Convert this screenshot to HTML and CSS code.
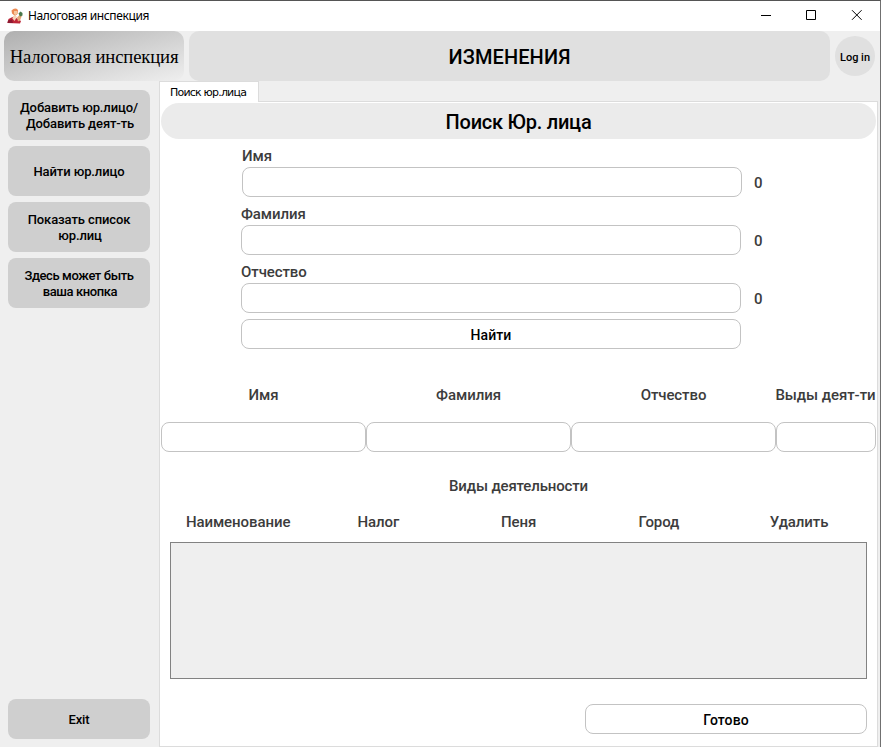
FILE: index.html
```html
<!DOCTYPE html>
<html lang="ru">
<head>
<meta charset="utf-8">
<title>Налоговая инспекция</title>
<link rel="stylesheet" href="styles.css">
</head>
<body>
<div class="window">
  <div class="titlebar">
    <svg class="app-icon" width="16" height="16" viewBox="0 0 16 16">
      <path d="M4.500 2.500Q8-1 11 2l-.5 4L8 8 5 5.500z" fill="#ec8a52"/>
      <path d="M7 3h3v3L8.500 7 7 6z" fill="#f6c79c"/>
      <path d="M.5 15l1-4 4-2 3 .5L14 13l-1 2.500z" fill="#bd2638"/>
      <path d="M6 8l2.500-.8L10 9l-2.500 4-2-2.500z" fill="#f5d4b8"/>
      <path d="M10 9.500l3-3 2 1-2 5-2 1z" fill="#e5a877"/>
      <path d="M11.500 5.500l2-2 2 1.500v2.500l-2.500 1z" fill="#48784b"/>
      <path d="M1 12.500l4-1 1 3.500H.5z" fill="#8d1830"/>
    </svg>
    <span class="app-name">Налоговая инспекция</span>
    <svg class="controls" width="110" height="20" viewBox="0 0 110 20" fill="none" stroke="#000">
      <path d="M1 9.500h10M46.500 4.500h9v9h-9z"/>
      <path d="M92 4.200l9.600 9.600M101.600 4.200L92 13.800"/>
    </svg>
  </div>
  <header class="header">
    <div class="brand">Налоговая инспекция</div>
    <div class="heading"><span>ИЗМЕНЕНИЯ</span></div>
    <button class="login">Log in</button>
  </header>
  <div class="body">
    <nav class="sidebar">
      <button class="side-btn"><span>Добавить юр.лицо/</span><span class="nudged">Добавить деят-ть</span></button>
      <button class="side-btn"><span>Найти юр.лицо</span></button>
      <button class="side-btn"><span>Показать список</span><span class="nudged">юр.лиц</span></button>
      <button class="side-btn tight"><span>Здесь может быть</span><span class="nudged">ваша кнопка</span></button>
      <button class="side-btn exit">Exit</button>
    </nav>
    <main class="main">
      <div class="tab">Поиск юр.лица</div>
      <section class="panel">
        <h1 class="title"><span>Поиск Юр. лица</span></h1>
        <form class="search">
          <label class="first">Имя</label>
          <div class="row first"><input type="text"><output>0</output></div>
          <label>Фамилия</label>
          <div class="row"><input type="text"><output>0</output></div>
          <label>Отчество</label>
          <div class="row last"><input type="text"><output>0</output></div>
          <button class="plain find" type="button">Найти</button>
        </form>
        <div class="person heads">
          <span>Имя</span><span>Фамилия</span><span>Отчество</span><span class="kinds">Выды деят-ти</span>
        </div>
        <div class="person fields"><input type="text"><input type="text"><input type="text"><input type="text"></div>
        <h2 class="subtitle">Виды деятельности</h2>
        <div class="columns"><span>Наименование</span><span>Налог</span><span>Пеня</span><span>Город</span><span>Удалить</span></div>
        <div class="list"></div>
        <button class="plain done" type="button">Готово</button>
      </section>
    </main>
  </div>
</div>
</body>
</html>
```
FILE: styles.css
```css
* { box-sizing: border-box; }
body { margin: 0; font-family: Roboto, "Liberation Sans", sans-serif; }
button, input { font: inherit; margin: 0; padding: 0; border: 0; color: #000; }
.window {
  width: 881px; height: 747px; overflow: hidden;
  display: flex; flex-direction: column;
  background: #efefef;
  border-top: 1px solid #555; border-right: 1px solid #707070;
}
.titlebar { height: 30px; flex: none; display: flex; align-items: center; background: #fff; padding: 0 10px 0 7px; }
.app-name { font: 12px/16px "Noto Sans", sans-serif; margin-left: 5px; letter-spacing: -.38px; }
.controls { margin-left: auto; }
.header { height: 50px; flex: none; display: flex; align-items: center; gap: 5px; padding: 0 5px 0 4px; }
.brand {
  width: 180px; height: 50px; border-radius: 10px;
  display: flex; align-items: center; justify-content: center;
  background: linear-gradient(165deg, #afafaf, #efefef);
  font: 18.700px/20px "Liberation Serif", serif; letter-spacing: -.15px; padding-top: 2px; white-space: nowrap;
}
.heading {
  flex: 1; height: 50px; border-radius: 10px; background: #e0e0e0;
  display: flex; align-items: center; justify-content: center;
  font-size: 20px; font-weight: 500; padding-top: 2px; letter-spacing: .1px;
}
.login { width: 40px; height: 40px; border-radius: 50%; background: #e0e0e0; font-size: 11px; font-weight: 500; padding-top: 2px; white-space: nowrap; }
.body { flex: 1; min-height: 0; display: flex; }
.sidebar { width: 159px; flex: none; padding: 9px 9px 8px 8px; display: flex; flex-direction: column; gap: 6px; }
.side-btn {
  height: 50px; border-radius: 8px; background: #cfcfcf;
  font-size: 13px; line-height: 16px; font-weight: 500; letter-spacing: -.1px;
  display: flex; flex-direction: column; align-items: center; justify-content: center;
  padding-top: 2px; white-space: nowrap;
}
.tight { letter-spacing: -.4px; }
.nudged { margin-left: 2px; }
.exit { height: 40px; margin-top: auto; }
.main { width: 719px; display: flex; flex-direction: column; }
.tab {
  width: 100px; height: 21px; margin-bottom: -1px; position: relative;
  border: 1px solid #dcdcdc; border-bottom: 0; background: #fff;
  font: 11px/21px "DejaVu Sans", sans-serif; letter-spacing: -.8px; padding-left: 10px; white-space: nowrap;
}
.panel { height: 646px; border: 1px solid #dcdcdc; background: #fff; display: flex; flex-direction: column; color: #3c3c3c; font-size: 15px; font-weight: 500; letter-spacing: -.08px; }
.title {
  margin: 1px 1px 0; height: 36px; border-radius: 18px; background: #ebebeb; color: #000;
  font-size: 20px; display: flex; align-items: center; justify-content: center; font-weight: 500; padding-top: 2px; letter-spacing: -.25px;
}
.search { margin: 8px 0 0 81px; width: 540px; display: flex; flex-direction: column; }
.search label { height: 20px; line-height: 18px; }
.row { display: flex; align-items: center; height: 30px; margin-bottom: 8px; }
.last { margin-bottom: 6px; }
.first { margin-left: 1px; }
.row output { margin-left: 13px; padding-top: 2px; }
.first output { margin-left: 12px; }
input, .plain { height: 30px; border: 1px solid #c3c3c3; border-radius: 8px; background: #fff; }
.row input { width: 500px; }
.plain { font-size: 14px; font-weight: 500; padding-top: 2px; letter-spacing: .1px; }
.find { width: 500px; }
.person { display: grid; grid-template-columns: 205px 205px 205px 100px; padding-left: 1px; }
.heads { margin-top: 36px; height: 20px; line-height: 20px; text-align: center; white-space: nowrap; }
.kinds { margin-left: -1px; letter-spacing: -.05px; }
.fields { margin-top: 17px; }
.fields input { width: 100%; }
.subtitle { margin: 24px 0 0; font-size: 15px; line-height: 20px; font-weight: 500; text-align: center; letter-spacing: -.15px; }
.columns { display: grid; grid-template-columns: repeat(5, 140.250px); margin: 16px 0 0 8px; height: 20px; line-height: 20px; text-align: center; }
.list { margin: 10px 10px 0; height: 137px; background: #efefef; border: 1px solid #828282; }
.done { width: 282px; margin: 25px 10px 0 auto; }
```
